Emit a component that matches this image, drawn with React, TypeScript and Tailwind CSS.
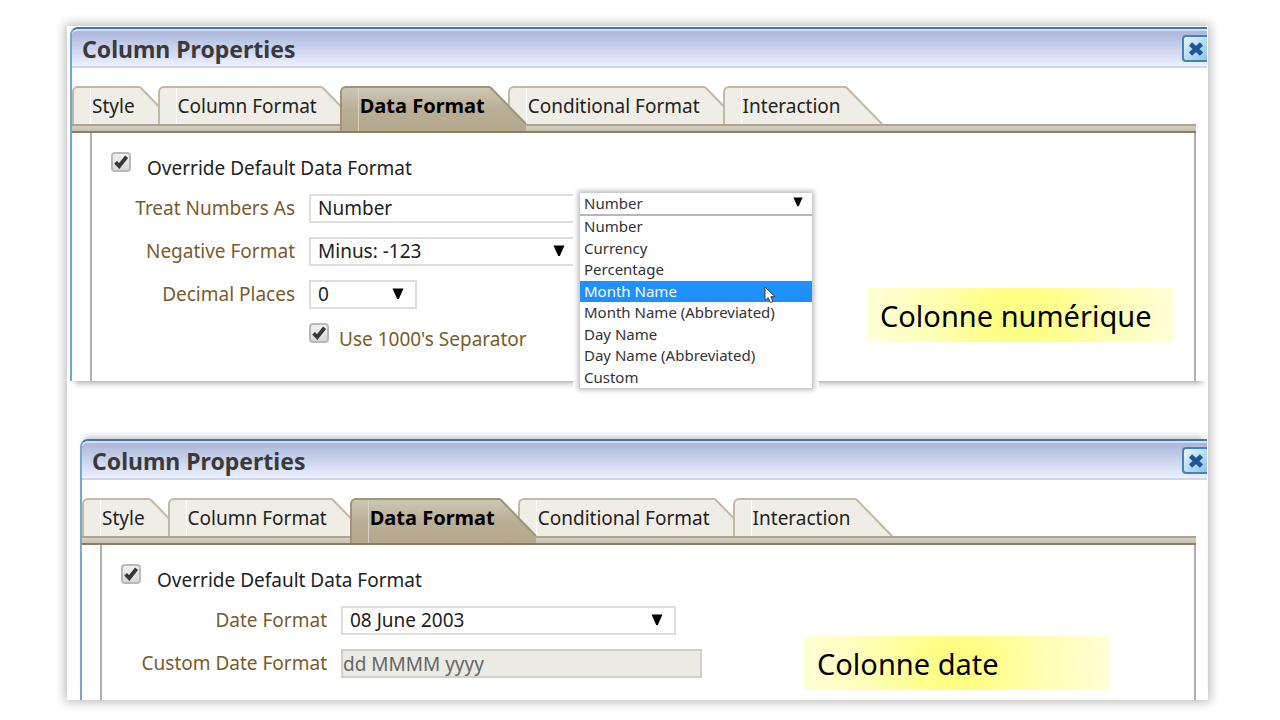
import React, { useState } from 'react';
import clsx from 'clsx';

const TABS = ['Style', 'Column Format', 'Data Format', 'Conditional Format', 'Interaction'];

const NUMBER_TYPES = [
    'Number',
    'Currency',
    'Percentage',
    'Month Name',
    'Month Name (Abbreviated)',
    'Day Name',
    'Day Name (Abbreviated)',
    'Custom',
];

const ArrowIcon: React.FC<{ className?: string }> = ({ className }) => (
    <svg viewBox="0 0 12 12" className={className} aria-hidden="true">
        <path d="M0.5 0.5h11L6.8 11H5.2z" fill="#000" />
    </svg>
);

const CloseButton: React.FC = () => (
    <button
        type="button"
        aria-label="Close"
        className="flex h-[27px] w-[25px] items-center justify-center rounded-l border-2 border-r-0 border-[#4682b8] bg-linear-to-br from-[#e8f6fd] to-[#8cc4e6]"
    >
        <svg viewBox="0 0 18 18" className="h-[18px] w-[18px]" aria-hidden="true">
            <path d="M3.5 4l11 10M14.5 4l-11 10" stroke="#1f5596" strokeWidth="4.6" fill="none" />
        </svg>
    </button>
);

interface TabProps {
    label: string;
    active: boolean;
    onSelect: () => void;
}

const Tab: React.FC<TabProps> = ({ label, active, onSelect }) => (
    <button
        type="button"
        role="tab"
        aria-selected={active}
        onClick={onSelect}
        className={clsx('relative -mr-[18px] flex shrink-0', active ? 'z-10 -mb-[7px] h-[45px]' : 'h-[38px]')}
    >
        <span
            className={clsx(
                'flex h-full rounded-tl-md border-t-2 border-l-2 pr-[5px]',
                active
                    ? 'border-[#9f9378] bg-linear-to-b from-[#cdc6b2] via-[#b9af96] to-[#b3a88c]'
                    : 'border-[#c2b9a5] bg-[#f0ede6]'
            )}
        >
            <span className={clsx('h-full w-[17px] border-r', active ? 'border-[#d9d3c2]' : 'border-white')} />
            <span
                className={clsx(
                    'pl-px leading-9 whitespace-nowrap',
                    active ? 'text-[20px] font-bold text-black' : 'text-[19px] text-[#222]'
                )}
            >
                {label}
            </span>
        </span>
        {/* slanted right edge, the next tab covers its lower half */}
        <svg viewBox="0 0 38 45" className="-mr-[2px] h-[45px] w-[38px] shrink-0" aria-hidden="true">
            <defs>
                <linearGradient id="activeTab" x1="0" y1="0" x2="0" y2="1">
                    <stop offset="0" stopColor="#cdc6b2" />
                    <stop offset="0.5" stopColor="#b9af96" />
                    <stop offset="1" stopColor="#b3a88c" />
                </linearGradient>
            </defs>
            <path d={active ? 'M0 1L36 38V45H0z' : 'M0 1L36 38H0z'} fill={active ? 'url(#activeTab)' : '#f0ede6'} />
            <path d="M0 1L36 38" stroke={active ? '#9f9378' : '#c2b9a5'} strokeWidth="2" fill="none" />
        </svg>
    </button>
);

const CheckBox: React.FC<{ id: string }> = ({ id }) => (
    <span className="relative h-5 w-5 shrink-0">
        <input
            id={id}
            type="checkbox"
            defaultChecked
            className="peer block h-5 w-5 appearance-none rounded border-2 border-[#b9b9b9] bg-linear-to-b from-[#f0f0f0] to-[#d9d9d9]"
        />
        <svg
            viewBox="0 0 20 20"
            className="pointer-events-none absolute inset-0 hidden h-5 w-5 peer-checked:block"
            aria-hidden="true"
        >
            <path d="M4.6 10.2l3.6 3.8L15.6 4.8" stroke="#383838" strokeWidth="3.8" fill="none" />
        </svg>
    </span>
);

interface SelectBoxProps {
    id: string;
    options: string[];
    className: string;
}

const SelectBox: React.FC<SelectBoxProps> = ({ id, options, className }) => (
    <span className={clsx('relative', className)}>
        <select
            id={id}
            className="block h-[29px] w-full appearance-none border-2 border-[#deded9] bg-white px-[7px] text-[19px] leading-[25px] text-[#222]"
        >
            {options.map(option => (
                <option key={option}>{option}</option>
            ))}
        </select>
        <ArrowIcon className="pointer-events-none absolute top-2 right-[13px] h-3 w-3" />
    </span>
);

interface FieldProps {
    id: string;
    label: string;
    labelClass: string;
    children: React.ReactNode;
}

const Field: React.FC<FieldProps> = ({ id, label, labelClass, children }) => (
    <div className="flex gap-[14px]">
        <label htmlFor={id} className={clsx('shrink-0 text-right leading-[29px] text-[#7a5c2b]', labelClass)}>
            {label}
        </label>
        {children}
    </div>
);

const Callout: React.FC<{ className: string; children: React.ReactNode }> = ({ className, children }) => (
    <p
        className={clsx(
            'absolute h-[54px] w-[306px] bg-[radial-gradient(circle_at_center,#ffff80_0%,#ffff88_20%,#ffffb8_60%,#ffffd8_100%)] px-[13px] text-[29px] leading-[56px] text-black',
            className
        )}
    >
        {children}
    </p>
);

interface PanelProps {
    id: string;
    className?: string;
    children: React.ReactNode;
    overlay: React.ReactNode;
}

const Panel: React.FC<PanelProps> = ({ id, className, children, overlay }) => {
    const [activeTab, setActiveTab] = useState('Data Format');

    return (
        <section
            className={clsx(
                'relative rounded-tl-lg border-t-2 border-l-2 border-t-[#3d7ba3] border-l-[#74a9c9] bg-white',
                className
            )}
        >
            <header className="flex h-[39px] items-center justify-between rounded-tl-md border-t-2 border-b-2 border-t-[#d6def2] border-b-[#cdd6ee] bg-linear-to-b from-[#abb6da] to-[#edf1ff] pl-[10px]">
                <h2 className="text-[23px] leading-8 font-bold text-[#3a3a3a]">Column Properties</h2>
                <CloseButton />
            </header>

            <div className="mr-[11px] pt-[18px]">
                <div role="tablist" className="flex items-start">
                    {TABS.map(tab => (
                        <Tab key={tab} label={tab} active={tab === activeTab} onSelect={() => setActiveTab(tab)} />
                    ))}
                </div>
                <div className="h-[9px] border-t-2 border-b-2 border-t-[#aea48d] border-b-[#8b7e66] bg-linear-to-b from-[#d3cfc2] to-[#c8c1ae]" />
            </div>

            <div className="mr-[11px] ml-[18px] border-r-2 border-l-2 border-[#b0b0b0] pt-[19px]">
                <div className="flex gap-4 pl-[19px]">
                    <CheckBox id={`${id}-override`} />
                    <label htmlFor={`${id}-override`} className="leading-8 text-[#222]">
                        Override Default Data Format
                    </label>
                </div>
                {children}
            </div>
            {overlay}
        </section>
    );
};

const NumberTypeMenu: React.FC = () => {
    const [highlighted, setHighlighted] = useState('Month Name');

    return (
        <div className="absolute top-[162px] left-[501px] z-20 bg-white px-[7px] pt-[2px] pb-2">
            <div className="w-[232px] bg-white text-[15px] text-[#333] shadow-[0_0_5px_2px_rgba(0,0,0,0.28)]">
                <div className="relative border-b-2 border-[#b4b8c6]">
                    <select
                        aria-label="Number type"
                        className="block h-[21px] w-full appearance-none bg-white px-1 text-[15px] leading-[21px]"
                    >
                        {NUMBER_TYPES.map(type => (
                            <option key={type}>{type}</option>
                        ))}
                    </select>
                    <ArrowIcon className="pointer-events-none absolute top-1 right-[9px] h-[10px] w-[10px]" />
                </div>
                <ul role="listbox" aria-label="Number types" className="grid h-[172px] grid-rows-8">
                    {NUMBER_TYPES.map(type => (
                        <li
                            key={type}
                            role="option"
                            aria-selected={type === highlighted}
                            onMouseEnter={() => setHighlighted(type)}
                            className={clsx(
                                'px-1 leading-[21px] whitespace-nowrap',
                                type === highlighted && 'bg-[#1e90ff] text-white'
                            )}
                        >
                            {type}
                        </li>
                    ))}
                </ul>
            </div>
            <svg viewBox="0 0 12 18" className="absolute top-[95px] left-[191px] h-[18px] w-3" aria-hidden="true">
                <path
                    d="M1 1v13.5l3.2-2.8 2.2 5 2.6-1.2-2.2-4.8H11z"
                    fill="#fff"
                    stroke="#333a50"
                    strokeWidth="1"
                />
            </svg>
        </div>
    );
};

const App: React.FC = () => {
    return (
        <main className="bg-white pt-[26px] pr-[72px] pb-5 pl-[67px] font-['Noto_Sans',sans-serif] text-[19px]">
            <div className="bg-white pt-px pr-px pl-[3px] shadow-[0_0_10px_2px_rgba(0,0,0,0.28)]">
                <Panel
                    id="number"
                    className="shadow-[0_7px_6px_-5px_rgba(0,0,0,0.35)]"
                    overlay={
                        <>
                            <NumberTypeMenu />
                            <Callout className="right-[34px] bottom-[39px]">Colonne numérique</Callout>
                        </>
                    }
                >
                    <div className="flex flex-col gap-[14px] pt-[10px] pb-[26px]">
                        <Field id="treat-numbers" label="Treat Numbers As" labelClass="w-[203px]">
                            <SelectBox id="treat-numbers" options={NUMBER_TYPES} className="w-[300px]" />
                        </Field>
                        <Field id="negative-format" label="Negative Format" labelClass="w-[203px]">
                            <SelectBox id="negative-format" options={['Minus: -123']} className="w-[269px]" />
                        </Field>
                        <Field id="decimal-places" label="Decimal Places" labelClass="w-[203px]">
                            <SelectBox id="decimal-places" options={['0', '1', '2']} className="w-[108px]" />
                        </Field>
                        <div className="flex gap-[10px] pl-[217px]">
                            <CheckBox id="separator" />
                            <label htmlFor="separator" className="leading-8 text-[#7a5c2b]">
                                Use 1000's Separator
                            </label>
                        </div>
                    </div>
                </Panel>

                <Panel
                    id="date"
                    className="mt-[58px] ml-[10px] shadow-[0_-6px_6px_-4px_rgba(0,0,0,0.25)]"
                    overlay={<Callout className="right-[97px] bottom-[10px]">Colonne date</Callout>}
                >
                    <div className="flex flex-col gap-[14px] pt-[10px] pb-[22px]">
                        <Field id="date-format" label="Date Format" labelClass="w-[225px]">
                            <SelectBox id="date-format" options={['08 June 2003']} className="w-[335px]" />
                        </Field>
                        <Field id="custom-date" label="Custom Date Format" labelClass="w-[225px]">
                            <input
                                id="custom-date"
                                type="text"
                                disabled
                                defaultValue="dd MMMM yyyy"
                                className="h-[29px] w-[361px] border-2 border-[#d0d0ca] bg-[#ebebe3] text-[19px] text-[#666]"
                            />
                        </Field>
                    </div>
                </Panel>
            </div>
        </main>
    );
};

export default App;
